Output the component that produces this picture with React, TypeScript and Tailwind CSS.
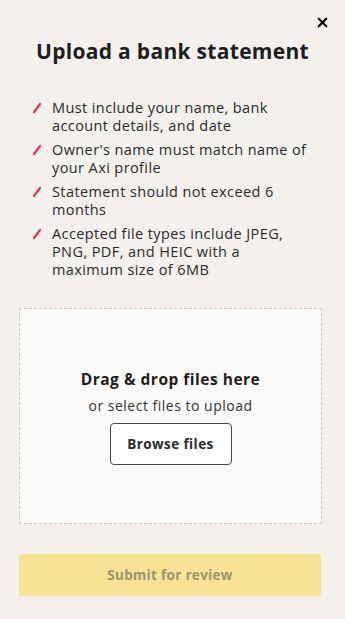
import { X } from 'lucide-react'

// lines broken as in the design
const rules = [
  ['Must include your name, bank', 'account details, and date'],
  ["Owner's name must match name of", 'your Axi profile'],
  ['Statement should not exceed 6', 'months'],
  ['Accepted file types include JPEG,', 'PNG, PDF, and HEIC with a', 'maximum size of 6MB'],
]

export default function App() {
  return (
    <div className="min-h-[619px] w-[345px] bg-[#f4f1ec] font-['Open_Sans',sans-serif] text-[#1d1d1f]">
      <div className="flex justify-end pt-[15px] pr-[15px]">
        <X className="w-[15px] h-[15px] text-black" strokeWidth={3.5} />
      </div>
      <h1 className="mt-[7px] text-center text-[21px] font-bold leading-[28px] tracking-[0.3px]">
        Upload a bank statement
      </h1>

      <ul className="mt-[34px] pl-[33px] pr-[10px] flex flex-col gap-[6px]">
        {rules.map((lines) => (
          <li key={lines[0]} className="flex gap-[11px] text-[14.5px] leading-[18px] font-medium tracking-[0.4px] text-[#2a2a2a]">
            <svg className="w-[8px] h-[18px] shrink-0" viewBox="0 0 8 18">
              <path d="M1 13 L7 5" stroke="#e3354c" strokeWidth={2.2} strokeLinecap="round" />
            </svg>
            <span className="flex flex-col whitespace-nowrap">
              {lines.map((l) => (
                <span key={l}>{l}</span>
              ))}
            </span>
          </li>
        ))}
      </ul>

      <div className="ml-[19px] mt-[29px] w-[303px] h-[216px] border border-dashed border-[#c9c6c2] bg-[#fbfaf8] flex flex-col items-center justify-center pt-[2px]">
        <p className="text-[15.5px] font-bold tracking-[0.5px] text-[#1f1d1b] leading-[20px]">Drag &amp; drop files here</p>
        <p className="mt-[8px] text-[14px] tracking-[0.5px] text-[#333] leading-[18px]">or select files to upload</p>
        <button className="mt-[8px] w-[122px] h-[42px] rounded-[4px] border-[1.5px] border-[#4a4a4a] bg-white text-[13.5px] font-bold tracking-[0.4px] text-[#2a2a2a]">
          Browse files
        </button>
      </div>

      <button className="ml-[19px] mt-[30px] w-[302px] h-[42px] rounded-[3px] bg-[#f7e393] text-[13.5px] font-bold tracking-[0.3px] text-[#9b9472]">
        Submit for review
      </button>
    </div>
  )
}
